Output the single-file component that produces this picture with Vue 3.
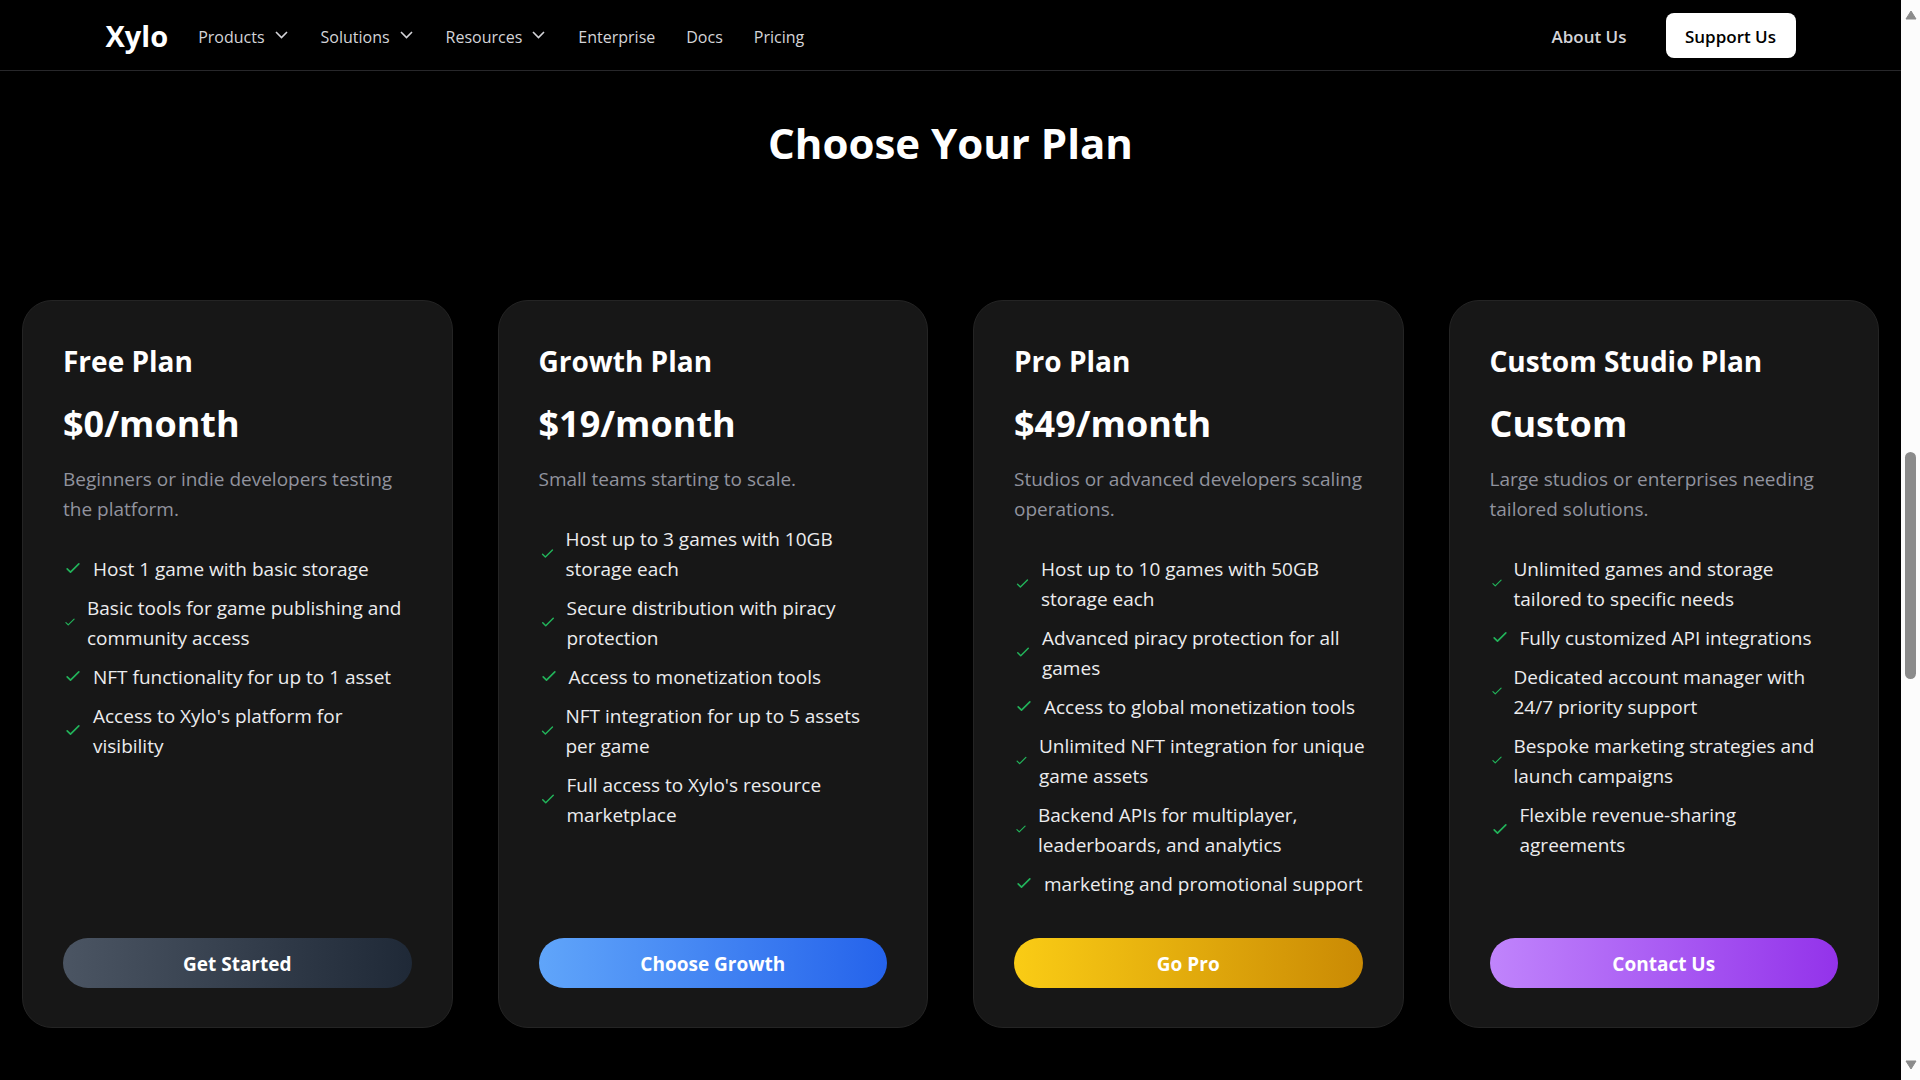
<script setup>
const menus = [
  { label: 'Products', expandable: true },
  { label: 'Solutions', expandable: true },
  { label: 'Resources', expandable: true },
  { label: 'Enterprise', expandable: false },
  { label: 'Docs', expandable: false },
  { label: 'Pricing', expandable: false },
]

// mark: size of the tick in front of each feature
const plans = [
  {
    name: 'Free Plan',
    price: '$0/month',
    summary: 'Beginners or indie developers testing the platform.',
    tone: 'slate',
    action: 'Get Started',
    features: [
      { text: 'Host 1 game with basic storage', mark: 20 },
      { text: 'Basic tools for game publishing and community access', mark: 14 },
      { text: 'NFT functionality for up to 1 asset', mark: 20 },
      { text: "Access to Xylo's platform for visibility", mark: 20 },
    ],
  },
  {
    name: 'Growth Plan',
    price: '$19/month',
    summary: 'Small teams starting to scale.',
    tone: 'blue',
    action: 'Choose Growth',
    features: [
      { text: 'Host up to 3 games with 10GB storage each', mark: 17 },
      { text: 'Secure distribution with piracy protection', mark: 18 },
      { text: 'Access to monetization tools', mark: 20 },
      { text: 'NFT integration for up to 5 assets per game', mark: 17 },
      { text: "Full access to Xylo's resource marketplace", mark: 18 },
    ],
  },
  {
    name: 'Pro Plan',
    price: '$49/month',
    summary: 'Studios or advanced developers scaling operations.',
    tone: 'gold',
    action: 'Go Pro',
    features: [
      { text: 'Host up to 10 games with 50GB storage each', mark: 17 },
      { text: 'Advanced piracy protection for all games', mark: 18 },
      { text: 'Access to global monetization tools', mark: 20 },
      { text: 'Unlimited NFT integration for unique game assets', mark: 15 },
      { text: 'Backend APIs for multiplayer, leaderboards, and analytics', mark: 14 },
      { text: 'marketing and promotional support', mark: 20 },
    ],
  },
  {
    name: 'Custom Studio Plan',
    price: 'Custom',
    summary: 'Large studios or enterprises needing tailored solutions.',
    tone: 'purple',
    action: 'Contact Us',
    features: [
      { text: 'Unlimited games and storage tailored to specific needs', mark: 14 },
      { text: 'Fully customized API integrations', mark: 20 },
      { text: 'Dedicated account manager with 24/7 priority support', mark: 14 },
      { text: 'Bespoke marketing strategies and launch campaigns', mark: 14 },
      { text: 'Flexible revenue-sharing agreements', mark: 20 },
    ],
  },
]
</script>

<template>
  <div class="window">
    <div class="page">
      <header class="topbar">
        <div class="topbar-inner">
          <a class="logo" href="#">Xylo</a>
          <nav class="menu" aria-label="Main">
            <template v-for="item in menus" :key="item.label">
              <button v-if="item.expandable" class="menu-item" type="button">
                {{ item.label }}
                <svg class="chevron" viewBox="0 0 16 16" aria-hidden="true">
                  <path d="M2 5 7.5 10.5 13 5" />
                </svg>
              </button>
              <a v-else class="menu-item" href="#">{{ item.label }}</a>
            </template>
          </nav>
          <div class="actions">
            <a class="about" href="#">About Us</a>
            <button class="support" type="button">Support Us</button>
          </div>
        </div>
      </header>

      <main>
        <h1>Choose Your Plan</h1>
        <section class="plans" aria-label="Plans">
          <article v-for="plan in plans" :key="plan.name" class="card">
            <h2>{{ plan.name }}</h2>
            <p class="price">{{ plan.price }}</p>
            <p class="summary">{{ plan.summary }}</p>
            <ul>
              <li v-for="feature in plan.features" :key="feature.text">
                <svg :style="{ width: feature.mark + 'px' }" viewBox="0 0 24 24" aria-hidden="true">
                  <path d="M5 13l4 4L19 7" />
                </svg>
                <span>{{ feature.text }}</span>
              </li>
            </ul>
            <button class="cta" :class="plan.tone" type="button">{{ plan.action }}</button>
          </article>
        </section>
      </main>
    </div>

    <div class="scrollbar" aria-hidden="true">
      <svg viewBox="0 0 12 10"><path d="M6 1 11 9H1z" /></svg>
      <div class="track"><div class="thumb"></div></div>
      <svg viewBox="0 0 12 10"><path d="M6 9 11 1H1z" /></svg>
    </div>
  </div>
</template>

<style>
body {
  margin: 0;
  background: #000;
}
</style>

<style scoped>
.window {
  display: flex;
  min-height: 100vh;
  background: #000;
  color: #fff;
  font-family: "Open Sans", "Noto Sans", sans-serif;
  font-size: 19px;
  line-height: 30px;
}

.page {
  flex: 1;
  min-width: 0;
}

button {
  padding: 0;
  border: 0;
  background: none;
  color: inherit;
  font: inherit;
  cursor: pointer;
}

a {
  color: inherit;
  text-decoration: none;
}

.topbar {
  border-bottom: 1px solid #27272a;
}

.topbar-inner {
  display: flex;
  align-items: center;
  box-sizing: border-box;
  max-width: 1750px;
  height: 70px;
  margin: 0 auto;
  padding: 0 30px;
}

.logo {
  margin-right: 30px;
  padding-top: 2px;
  font-size: 29px;
  font-weight: 700;
}

.menu,
.about {
  padding-top: 4px;
  color: #d4d4d8;
}

.menu {
  display: flex;
  gap: 31px;
  font-size: 16px;
}

.menu-item {
  display: flex;
  align-items: center;
  gap: 9px;
}

.chevron {
  width: 16px;
  height: 16px;
  margin-bottom: 4px;
  fill: none;
  stroke: currentColor;
  stroke-width: 1.6;
}

.actions {
  display: flex;
  align-items: center;
  gap: 39px;
  margin-left: auto;
  font-size: 17px;
  font-weight: 600;
}

.support {
  width: 130px;
  height: 45px;
  padding-top: 4px;
  border-radius: 8px;
  background: #fff;
  color: #000;
}

h1 {
  margin: 44px 0 0;
  font-size: 42px;
  line-height: 56px;
  font-weight: 700;
  text-align: center;
}

.plans {
  display: grid;
  grid-template-columns: repeat(4, 1fr);
  gap: 45px;
  padding: 129px 22px 51px;
}

.card {
  display: flex;
  flex-direction: column;
  padding: 40px 40px 39px;
  border: 1px solid #242424;
  border-radius: 30px;
  background: #171717;
}

h2,
.price {
  margin: 0 0 20px;
}

h2 {
  font-size: 28px;
  line-height: 40px;
  font-weight: 700;
}

.price {
  margin-bottom: 18px;
  font-size: 36px;
  line-height: 45px;
  font-weight: 700;
}

/* the running text reaches slightly into the card's right padding */
.summary,
ul {
  margin: 0 -5px 30px 0;
}

.summary {
  color: #91939e;
}

ul {
  display: flex;
  flex: 1;
  flex-direction: column;
  gap: 9px;
  margin-bottom: 39px;
  padding: 0;
  list-style: none;
}

li {
  display: flex;
  align-items: center;
  gap: 10px;
  color: #ececee;
}

li svg {
  flex: none;
  margin-bottom: 2px;
  fill: none;
  stroke: #22b35a;
  stroke-width: 2;
  stroke-linecap: round;
  stroke-linejoin: round;
}

.cta {
  height: 50px;
  padding-top: 2px;
  border-radius: 25px;
  font-weight: 700;
}

.slate {
  background: linear-gradient(to right, #4b5563, #1f2937);
}

.blue {
  background: linear-gradient(to right, #60a5fa, #2563eb);
}

.gold {
  background: linear-gradient(to right, #facc15, #ca8a04);
}

.purple {
  background: linear-gradient(to right, #c084fc, #9333ea);
}

.scrollbar {
  position: sticky;
  top: 0;
  display: flex;
  flex-direction: column;
  align-items: center;
  box-sizing: border-box;
  width: 19px;
  height: 100vh;
  padding: 10px 0;
  background: #fcfcfc;
}

.scrollbar svg {
  width: 12px;
  height: 10px;
  fill: #8b8b8b;
  stroke: #8b8b8b;
  stroke-width: 1;
  stroke-linejoin: round;
}

.track {
  display: flex;
  flex: 1;
  flex-direction: column;
}

.track::before,
.track::after {
  content: "";
  flex: 432;
}

.track::after {
  flex: 381;
}

.thumb {
  flex: 227;
  width: 11px;
  border-radius: 6px;
  background: #8b8b8b;
}
</style>
